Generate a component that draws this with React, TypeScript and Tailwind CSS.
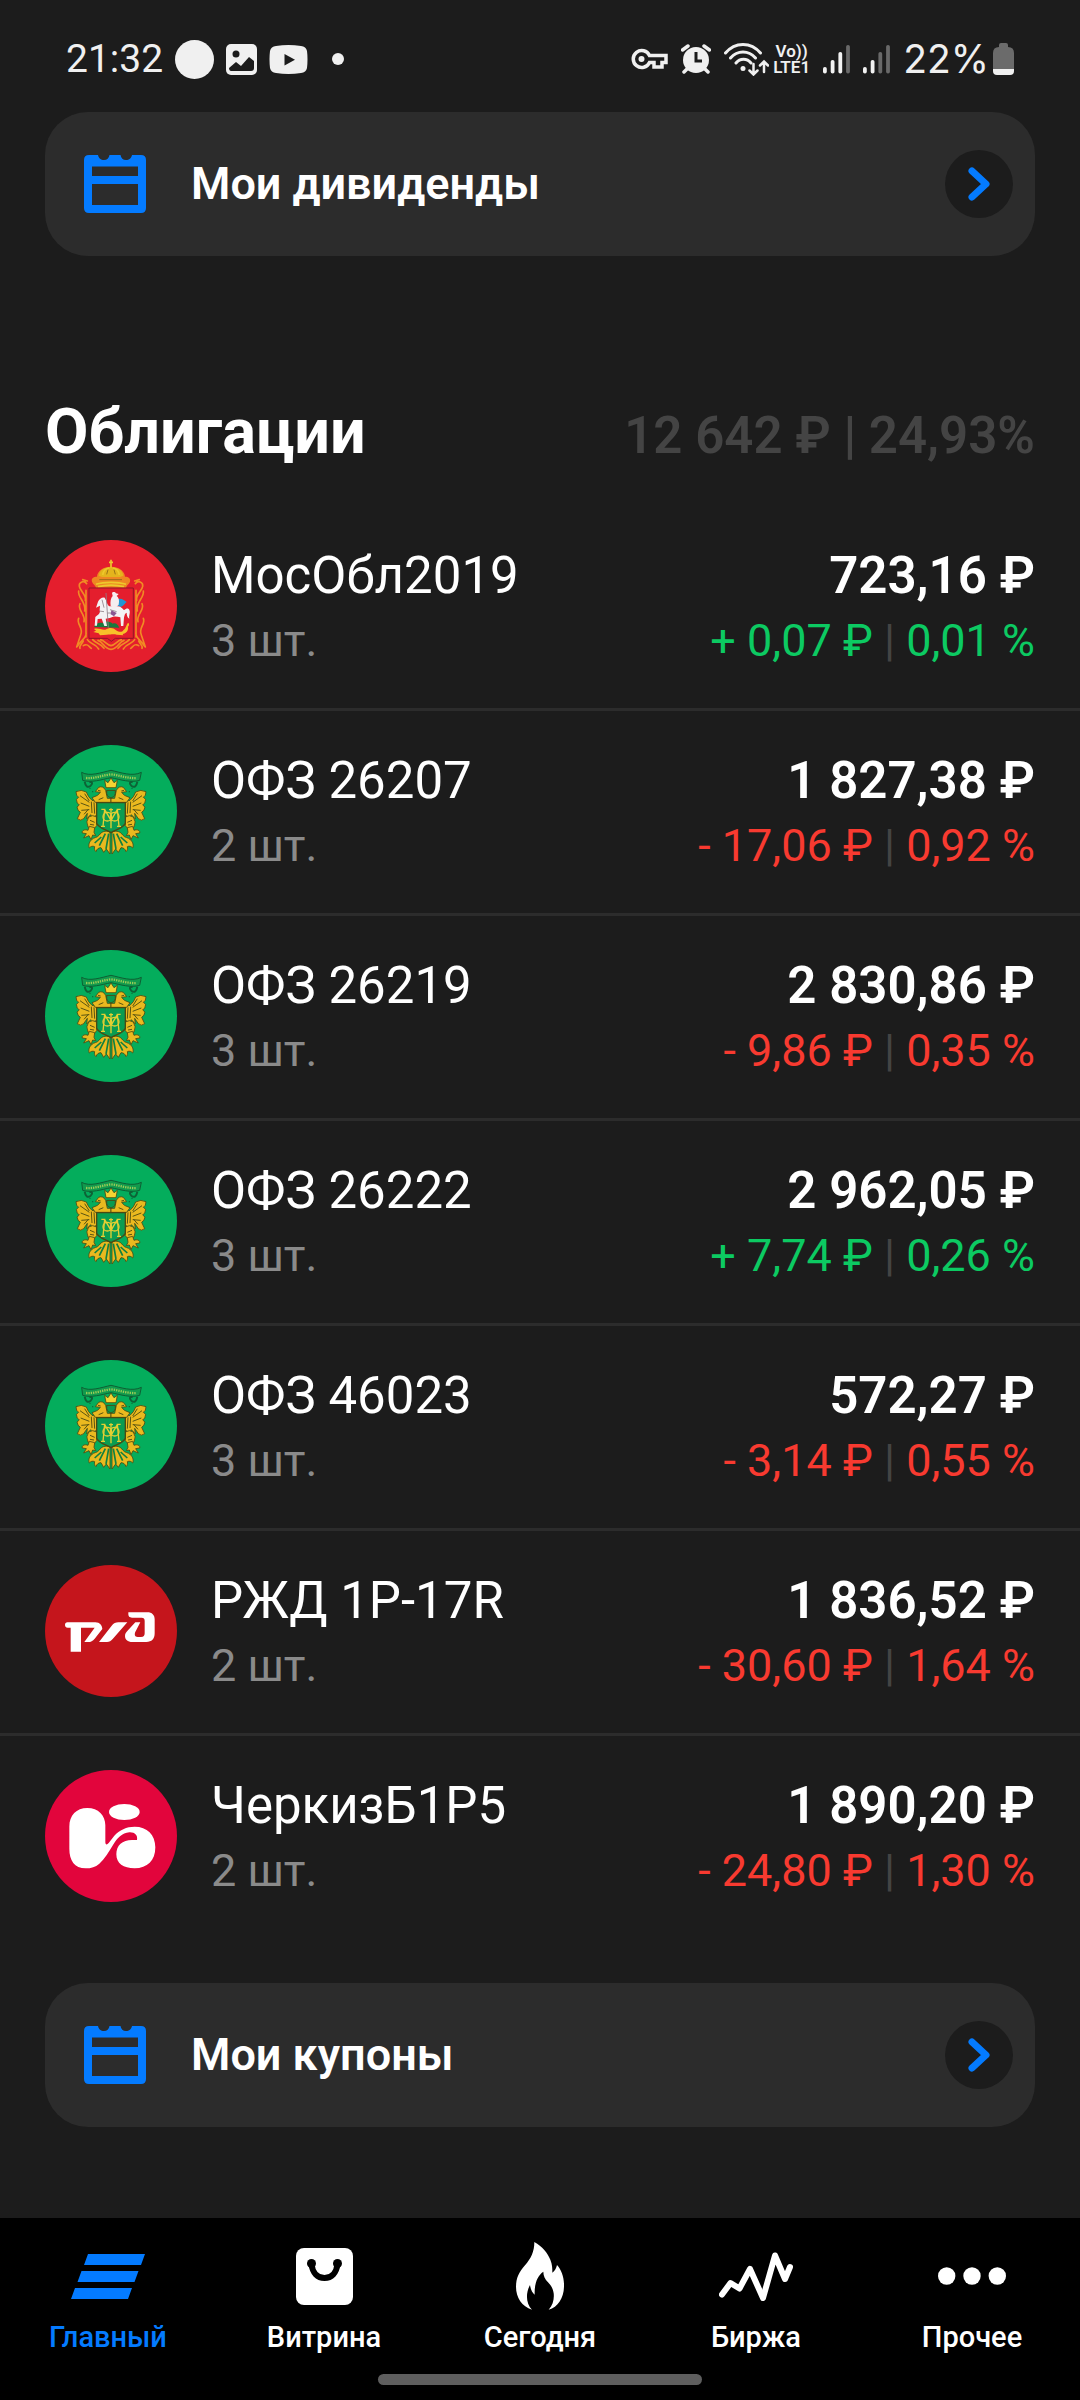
import type { ReactNode } from 'react';

type Logo = 'mosobl' | 'minfin' | 'rzd' | 'cherkizovo';

interface Bond {
  name: string;
  count: number;
  value: string;
  change: string;
  percent: string;
  up: boolean;
  logo: Logo;
}

const bonds: Bond[] = [
  { name: 'МосОбл2019', count: 3, value: '723,16', change: '+ 0,07', percent: '0,01', up: true, logo: 'mosobl' },
  { name: 'ОФЗ 26207', count: 2, value: '1 827,38', change: '- 17,06', percent: '0,92', up: false, logo: 'minfin' },
  { name: 'ОФЗ 26219', count: 3, value: '2 830,86', change: '- 9,86', percent: '0,35', up: false, logo: 'minfin' },
  { name: 'ОФЗ 26222', count: 3, value: '2 962,05', change: '+ 7,74', percent: '0,26', up: true, logo: 'minfin' },
  { name: 'ОФЗ 46023', count: 3, value: '572,27', change: '- 3,14', percent: '0,55', up: false, logo: 'minfin' },
  { name: 'РЖД 1Р-17R', count: 2, value: '1 836,52', change: '- 30,60', percent: '1,64', up: false, logo: 'rzd' },
  { name: 'ЧеркизБ1Р5', count: 2, value: '1 890,20', change: '- 24,80', percent: '1,30', up: false, logo: 'cherkizovo' },
];

function MosOblLogo() {
  return (
    <svg viewBox="45 27 396 396" className="size-full" aria-hidden="true">
      <circle cx="243" cy="225" r="198" fill="#e41e2d" />
      {/* ribbons */}
      <g fill="none" stroke="#f08a24" strokeWidth="5" strokeLinecap="round">
        <path d="M170 158c-8-12-24-4-22 8 2 14 22 26 18 42M146 180c-4 20 24 34 18 60M150 218c-10 18 18 32 12 54M146 262c-8 16 16 30 6 50l-12 36M168 300c4 20-14 26-26 46M160 330c-4 10-14 14-10 22M172 150l-14-4M168 178v140" />
        <path d="M316 158c8-12 24-4 22 8-2 14-22 26-18 42M340 180c4 20-24 34-18 60M336 218c10 18-18 32-12 54M340 262c8 16-16 30-6 50l12 36M318 300c-4 20 14 26 26 46M326 330c4 10 14 14 10 22M314 150l14-4M318 178v140" />
        <path d="M172 326c10 16 22 8 34 28M188 326c12 14 20 8 34 26M204 328c16 4 18 26 39 27 21-1 23-23 39-27M212 326c14 4 18 16 31 18 13-2 17-14 31-18M298 326c-12 14-20 8-34 26M314 326c-10 16-22 8-34 28M160 344c12-8 16 2 24 8M326 344c-12-8-16 2-24 8" />
      </g>
      {/* crown */}
      <path d="M186 152c-3-10 4-15 15-15 1-18 20-30 42-30s41 12 42 30c11 0 17 5 15 15-3 8-10 10-12 18h-90c-2-8-9-10-12-18z" fill="#ee8722" />
      <path d="M206 134c4-18 18-25 37-25s33 7 37 25l-10 4H216z" fill="#e4b41d" />
      <path d="M243 86v24M237 94h12M198 160c24-8 66-8 90 0M204 167c24-6 54-6 78 0M218 132c2-12 8-20 20-21M268 132c-2-12-8-20-20-21" fill="none" stroke="#edc92c" strokeWidth="5" />
      <path d="M230 130l4-14M256 130l-4-14M208 146h68" stroke="#8a6514" strokeWidth="2.500" />
      {/* shield */}
      <path d="M177 171h133v151h-54l-12 9-12-9h-55z" fill="#e41e2d" stroke="#911827" strokeWidth="3" />
      <path d="M192 288c6-14 20-14 26-12 10-8 24-4 30 2 10-4 16 4 20 12z" fill="#177a3d" />
      <path d="M262 205c10-6 22 2 28 8-5 3-9 12-16 14-8 1-14-4-18-10z" fill="#2195d3" />
      <path d="M204 212c4-8 12-14 20-12l4 8c3 8 4 14 10 18h26c10 1 14 8 18 12 8-8 14-6 16-1 4 8-2 16 0 26-6-4-8-10-8-18-6 2-6 8-8 14l-2 26h-7l-2-26c-12-4-22-4-32 2l-12 2 4 22h-8l-8-22-12 1-2 20h-7l2-26c8-8 12-8 14-16-2-6 0-12 0-18l-12 6z" fill="#f3f2f4" />
      <path d="M246 186c2-5 10-4 12 1l8 2-6 6c8 6 8 16 6 26l-12 12-12-8c-2-12 0-24 6-30z" fill="#f5eef0" />
      <path d="M228 186l7 104M216 206l6 24M240 236l20 6M232 246h20M208 240l14 2" stroke="#8e8088" strokeWidth="2.500" />
      <path d="M244 238l16 8-8 10-10-6z" fill="#8a5791" />
      <path d="M192 294c12-4 24 4 34 2 12-6 22-8 32 2 10 6 18 6 22 0 8-6 8-16 14-23 5 2 4 8 0 12 2 12-6 20-16 22l2 4-20-2c-10-2-18 0-30 0l-20 2-4-6-16-4 8-4z" fill="#f8c02a" />
    </svg>
  );
}

function MinfinLogo() {
  const wing = (
    <g stroke="#4a4a12" strokeWidth="2.500" strokeLinejoin="round" fill="#eab91f">
      <path d="M204 212L186 208Q174 198 169 183Q154 174 138 182Q138 195 146 199L139 205Q140 218 148 222L141 228Q143 240 151 244L142 263Q152 272 161 263L172 247L170 264L182 251L187 260L201 252z" />
      <path d="M232 202L227 178Q219 163 206 169L196 182L211 184Q207 194 186 200L196 214H243V202z" />
      <path d="M176 258Q188 250 200 258V284L190 296L174 288Q166 272 176 258z" />
      <path d="M178 286l-4 12c-8-4-20 0-17 8l12 2-8 13 16-7 6 12 5-14 9 2-5-10 2-14z" />
      <path d="M240 302c-14-4-26 0-32 10-8 10-16 6-23 14-9 8-10 18-7 25 4-5 10-7 16-4-2 6 0 11 4 15 2-8 8-12 15-12 3 4 5 10 8 14l8-10 11 15z" />
    </g>
  );
  const feathers = (
    <g fill="none" stroke="#5a5412" strokeWidth="3">
      <path d="M150 194l28 20M152 216l26 10M154 238l24-2M162 250l14-16M164 188l14 22M184 212l2 34M192 214l2 34M180 268l14 6M180 280l12 2M204 178l8 2M206 206l14-6" />
      <path d="M236 308l-8 46M226 308l-18 36M214 318l-20 18" stroke="#12803f" strokeWidth="5" />
    </g>
  );
  return (
    <svg viewBox="45 42 396 396" className="size-full" aria-hidden="true">
      <circle cx="243" cy="240" r="198" fill="#04ad5c" />
      <path d="M155 124c24 14 60 0 88-6 28 6 64 20 91 6l-5 24c-26 8-58-2-86-8-28 6-60 16-85 8z" fill="#129a4d" stroke="#0c6034" strokeWidth="3" />
      <path d="M168 141c28 2 48-8 75-11 27 3 50 13 77 11" fill="none" stroke="#9acb57" strokeWidth="7" strokeDasharray="4 3" />
      <path d="M164 152c2 12 8 20 18 12 8-6 4-14-4-10M322 152c-2 12-8 20-18 12-8-6-4-14 4-10" fill="none" stroke="#0d6236" strokeWidth="6" />
      <g fill="#0d6236">
        <circle cx="188" cy="182" r="2" />
        <circle cx="298" cy="182" r="2" />
        <circle cx="180" cy="172" r="2" />
        <circle cx="306" cy="172" r="2" />
      </g>
      {wing}
      {feathers}
      <g transform="matrix(-1 0 0 1 486 0)">
        {wing}
        {feathers}
      </g>
      <path d="M228 170l-4-22 10 7 9-14 9 14 10-7-4 22z" fill="#f4d332" stroke="#4a4a12" strokeWidth="2.500" />
      <path d="M230 178h26v10c-2 8-8 11-13 13-5-2-11-5-13-13z" fill="#0b9a50" stroke="#4a4a12" strokeWidth="3" />
      <path d="M200 215h86v62c-8 16-28 18-43 28-15-10-35-12-43-28z" fill="#0a9c51" stroke="#4a4a12" strokeWidth="4" />
      {/* monogram */}
      <g fill="none" stroke="#e4cf33" strokeWidth="4">
        <path d="M214 235h10l-5 51M272 235h-10l5 51M213 286h12M261 286h12M224 236l19 32 19-32" />
        <ellipse cx="232" cy="257" rx="13" ry="13" />
        <ellipse cx="254" cy="257" rx="13" ry="13" />
        <path d="M243 232v60M237 236h12" />
      </g>
    </svg>
  );
}

function RzdLogo() {
  return (
    <svg viewBox="45 47 396 396" className="size-full" aria-hidden="true">
      <circle cx="243" cy="245" r="198" fill="#c5151c" />
      <g fill="#fff">
        <path d="M112 219h84c14 0 20 9 21 20l-23 29c-6 7-11 10-20 10h-11l31-43h-41v72h-31v-72h-9c-5 0-8-3-8-8s3-8 7-8z" />
        <path d="M207 278l38-49c6-7 12-10 20-10h27l-44 50c-5 6-10 9-17 9z" />
        <path d="M295 189h57c14 0 22 8 22 21v42c0 17-9 26-25 26h-42c-14 0-22-7-22-18 0-7 3-11 9-17l22-24h15l-14 27c-5 9-3 17 6 17h10c8 0 11-4 11-11v-37c0-7-3-10-9-10h-29c-8 0-11-4-11-10z" />
      </g>
    </svg>
  );
}

function CherkizovoLogo() {
  return (
    <svg viewBox="45 47 396 396" className="size-full" aria-hidden="true">
      <circle cx="243" cy="245" r="198" fill="#e2053c" />
      <g fill="#fff">
        <ellipse cx="283" cy="173" rx="46" ry="24" />
        <path d="M118 217C118 183 139 161 172 161S226 183 226 213V263C226 272 231 272 236 266L253 244C268 227 290 217 314 217C351 217 376 241 376 279C376 319 352 342 314 342C280 342 259 327 259 300C259 273 277 257 306 257H321C324 243 314 233 298 234C276 236 262 251 249 272C236 293 224 314 208 328C196 338 184 342 167 342C133 342 118 318 118 283z" />
      </g>
    </svg>
  );
}

const logos: Record<Logo, () => ReactNode> = {
  mosobl: MosOblLogo,
  minfin: MinfinLogo,
  rzd: RzdLogo,
  cherkizovo: CherkizovoLogo,
};

function Signal({ level }: { level: number }) {
  return (
    <svg viewBox="0 0 27 30" className="h-[30px] w-[27px]" aria-hidden="true">
      {[23, 16, 8, 1].map((y, i) => (
        <rect key={y} x={i * 7.7} y={y} width="3.800" height={29.500 - y} rx="1.800" fill={i < level ? '#f2f2f2' : '#696969'} />
      ))}
    </svg>
  );
}

function StatusBar() {
  return (
    <header className="flex h-28 items-start justify-between px-[66px] pt-[39px] text-[#f0f0f0]">
      <div className="flex h-10 items-center gap-3">
        <time className="text-[39px] leading-10">21:32</time>
        <svg viewBox="0 0 39 39" className="size-[39px]" aria-hidden="true">
          <circle cx="19.500" cy="19.500" r="19.500" fill="currentColor" />
        </svg>
        <svg viewBox="0 0 31 31" className="size-[31px]" aria-hidden="true">
          <rect width="31" height="31" rx="5" fill="currentColor" />
          <circle cx="10" cy="10" r="3.500" fill="#1c1c1c" />
          <path d="M3 24l7-6 5 4 8-9 5 4v7c0 2-1 3-3 3H5c-1 0-2-1-2-3z" fill="#1c1c1c" />
        </svg>
        <svg viewBox="0 0 39 29" className="h-[29px] w-[39px]" aria-hidden="true">
          <path d="M7 1Q19.500-1 32 1q5 .5 6 5 1 8 0 17-1 4.500-6 5-12.500 2-25 0-5-.5-6-5-1-9 0-17 1-4.500 6-5z" fill="currentColor" />
          <path d="M15.500 9v11.500L26 14.700z" fill="#1c1c1c" />
        </svg>
        <span className="ml-3 size-3 rounded-full bg-[#f0f0f0]" />
      </div>

      <div className="flex h-10 items-center gap-[13px]">
        <svg viewBox="0 0 37 23" className="h-[23px] w-[37px]" fill="none" stroke="currentColor" aria-hidden="true">
          <path d="M18.500 7.500H35v7h-4v4.500h-8v-4.500h-4.500a8.500 8.500 0 1 1 0-7z" strokeWidth="3.500" />
          <circle cx="10.500" cy="11" r="3" fill="currentColor" stroke="none" />
        </svg>
        <svg viewBox="0 0 30 30" className="size-[30px]" aria-hidden="true">
          <circle cx="15" cy="16" r="13" fill="currentColor" />
          <path d="M1.500 6L7 2M28.500 6L23 2M6 25l-3 3M24 25l3 3" stroke="currentColor" strokeWidth="3.500" strokeLinecap="round" />
          <path d="M15 8v9h6" fill="none" stroke="#1c1c1c" strokeWidth="3" />
        </svg>
        <div className="flex items-center gap-1">
          <svg viewBox="0 0 45 34" className="h-[34px] w-[45px]" fill="none" stroke="currentColor" strokeWidth="3" strokeLinecap="round" aria-hidden="true">
            <path d="M1.500 11C11-.5 27-.5 36.500 11M6.500 16c7-8 18-8 25 0M12 21c4-5 11-5 15 0" />
            <circle cx="19" cy="26.500" r="2.500" fill="currentColor" stroke="none" />
            <path d="M29.500 22v10M25.500 28.500l4 4 4-4M40 30V20M36 23.500l4-4 4 4" strokeWidth="2.500" />
          </svg>
          <div className="flex flex-col items-center text-[17px] leading-4 font-semibold">
            <span>Vo))</span>
            <span>LTE1</span>
          </div>
        </div>
        <Signal level={3} />
        <Signal level={2} />
        <div className="flex items-center gap-1">
          <span className="font-['Inter',sans-serif] text-[39px] leading-10">22%</span>
          <svg viewBox="0 0 21 32" className="h-8 w-[21px]" aria-hidden="true">
            <path d="M6 4V2q0-2 2-2h5q2 0 2 2v2q6 0 6 6v17H0V10q0-6 6-6z" fill="#6b6b6b" />
            <path d="M0 26h21v2q0 4-4 4H4q-4 0-4-4z" fill="currentColor" />
          </svg>
        </div>
      </div>
    </header>
  );
}

function CalendarCard({ title }: { title: string }) {
  return (
    <button
      type="button"
      className="mx-[45px] flex h-36 items-center rounded-[43px] bg-[#2c2c2c] pr-[22px] pl-[39px] text-left"
    >
      <svg viewBox="0 0 62 58" className="h-[58px] w-[62px] shrink-0" aria-hidden="true">
        <path
          fillRule="evenodd"
          d="M5 0h9c.5 3 3 5 6 5s5-2 5.500-5h11c.5 3 2.500 5 5.500 5s5.500-2 6-5h9q5 0 5 5v48q0 5-5 5H5q-5 0-5-5V5q0-5 5-5zM8 11.500v9.500h46v-9.500zM8 29v21h46V29z"
          fill="#047bff"
        />
      </svg>
      <span className="ml-[45px] grow text-[45px] leading-[54px] font-semibold">{title}</span>
      <span className="flex size-[68px] items-center justify-center rounded-full bg-[#1c1c1c]">
        <svg viewBox="0 0 22 34" className="h-[34px] w-[22px]" aria-hidden="true">
          <path d="M4 4l14 13L4 30" fill="none" stroke="#047bff" strokeWidth="7" strokeLinecap="round" strokeLinejoin="round" />
        </svg>
      </span>
    </button>
  );
}

function BondRow({ bond }: { bond: Bond }) {
  const BondLogo = logos[bond.logo];
  return (
    <li className="border-b-[3px] border-[#2c2c2c] last:border-b-0">
      <a href="#" className="flex items-center px-[45px] pt-[34px] pb-9">
        <span className="size-[132px] shrink-0">
          <BondLogo />
        </span>
        <span className="ml-[34px] flex grow flex-col gap-2 pt-[2px]">
          <span className="text-[51px] leading-[60px]">{bond.name}</span>
          <span className="text-[45px] leading-[54px] text-[#8a8a8a]">{bond.count} шт.</span>
        </span>
        <span className="flex flex-col items-end gap-2 pt-[2px] whitespace-nowrap">
          <span className="text-[51px] leading-[60px] font-semibold">{bond.value} ₽</span>
          <span className={`text-[45px] leading-[54px] ${bond.up ? 'text-[#0cca62]' : 'text-[#f83a30]'}`}>
            {bond.change} ₽ <span className="text-[#444444]">|</span> {bond.percent} %
          </span>
        </span>
      </a>
    </li>
  );
}

const tabs: { label: string; active?: boolean; icon: ReactNode }[] = [
  {
    label: 'Главный',
    active: true,
    icon: (
      <svg viewBox="0 0 74 45" className="h-[45px] w-[74px]" fill="currentColor" aria-hidden="true">
        <path d="M17 0h57l-4 11H13zM10.500 17h57l-4 11H6.500zM4 34h57l-4 11H0z" />
      </svg>
    ),
  },
  {
    label: 'Витрина',
    icon: (
      <svg viewBox="0 0 57 57" className="size-[57px]" aria-hidden="true">
        <rect width="57" height="57" rx="8" fill="currentColor" />
        <circle cx="15.500" cy="15.500" r="4.500" />
        <circle cx="41.500" cy="15.500" r="4.500" />
        <path d="M15.500 16c1 9 6 14 13 14s12-5 13-14" fill="none" stroke="#000" strokeWidth="6" />
      </svg>
    ),
  },
  {
    label: 'Сегодня',
    icon: (
      <svg viewBox="51 39 144 204" className="h-[68px] w-12" fill="currentColor" aria-hidden="true">
        <path d="M106 39C130 52 146 72 154 92C160 106 160 118 160 131C167 126 172 118 174 108C188 124 196 146 195 173C194 207 177 234 149 242C162 228 166 210 164 193C162 177 154 167 147 160C138 151 133 141 133 128C114 141 106 165 107 197C101 192 95 183 93 168C80 192 80 224 99 242C69 232 51 206 51 173C51 147 60 130 78 109C96 88 106 68 106 39z" />
      </svg>
    ),
  },
  {
    label: 'Биржа',
    icon: (
      <svg viewBox="0 0 74 49" className="h-[49px] w-[74px]" fill="none" stroke="currentColor" strokeWidth="6" strokeLinecap="round" strokeLinejoin="round" aria-hidden="true">
        <path d="M3 42.500L11.500 31l9 5.500L31 17l13 29L56 3.500 66 27l5-12" />
      </svg>
    ),
  },
  {
    label: 'Прочее',
    icon: (
      <svg viewBox="0 0 68 18" className="h-[18px] w-[68px]" fill="currentColor" aria-hidden="true">
        <circle cx="8.700" cy="9" r="8.700" />
        <circle cx="34" cy="9" r="8.700" />
        <circle cx="59.300" cy="9" r="8.700" />
      </svg>
    ),
  },
];

function TabBar() {
  return (
    <nav className="mt-auto bg-black pt-[22px] pb-[15px]">
      <ul className="grid grid-cols-5">
        {tabs.map((tab) => (
          <li key={tab.label}>
            <a href="#" className={`flex flex-col items-center gap-2 ${tab.active ? 'text-[#047bff]' : 'text-white'}`}>
              <span className="flex h-18 items-center">{tab.icon}</span>
              <span className="text-[29px] leading-[34px] font-medium">{tab.label}</span>
            </a>
          </li>
        ))}
      </ul>
      <div className="mx-auto mt-5 h-[11px] w-3/10 rounded-full bg-[#5e5e5e]" />
    </nav>
  );
}

export default function App() {
  return (
    <div className="flex min-h-screen flex-col bg-[#1c1c1c] font-['Roboto',sans-serif] text-white">
      <StatusBar />
      <main className="flex flex-col pb-[89px]">
        <CalendarCard title="Мои дивиденды" />
        <div className="mt-[140px] flex items-baseline justify-between px-[45px]">
          <h1 className="text-[63px] leading-[72px] font-bold">Облигации</h1>
          <p className="text-[51px] leading-[60px] font-semibold text-[#444444]">12 642 ₽ | 24,93%</p>
        </div>
        <ul className="mt-[38px] mb-[45px]">
          {bonds.map((bond) => (
            <BondRow key={bond.name} bond={bond} />
          ))}
        </ul>
        <CalendarCard title="Мои купоны" />
      </main>
      <TabBar />
    </div>
  );
}
